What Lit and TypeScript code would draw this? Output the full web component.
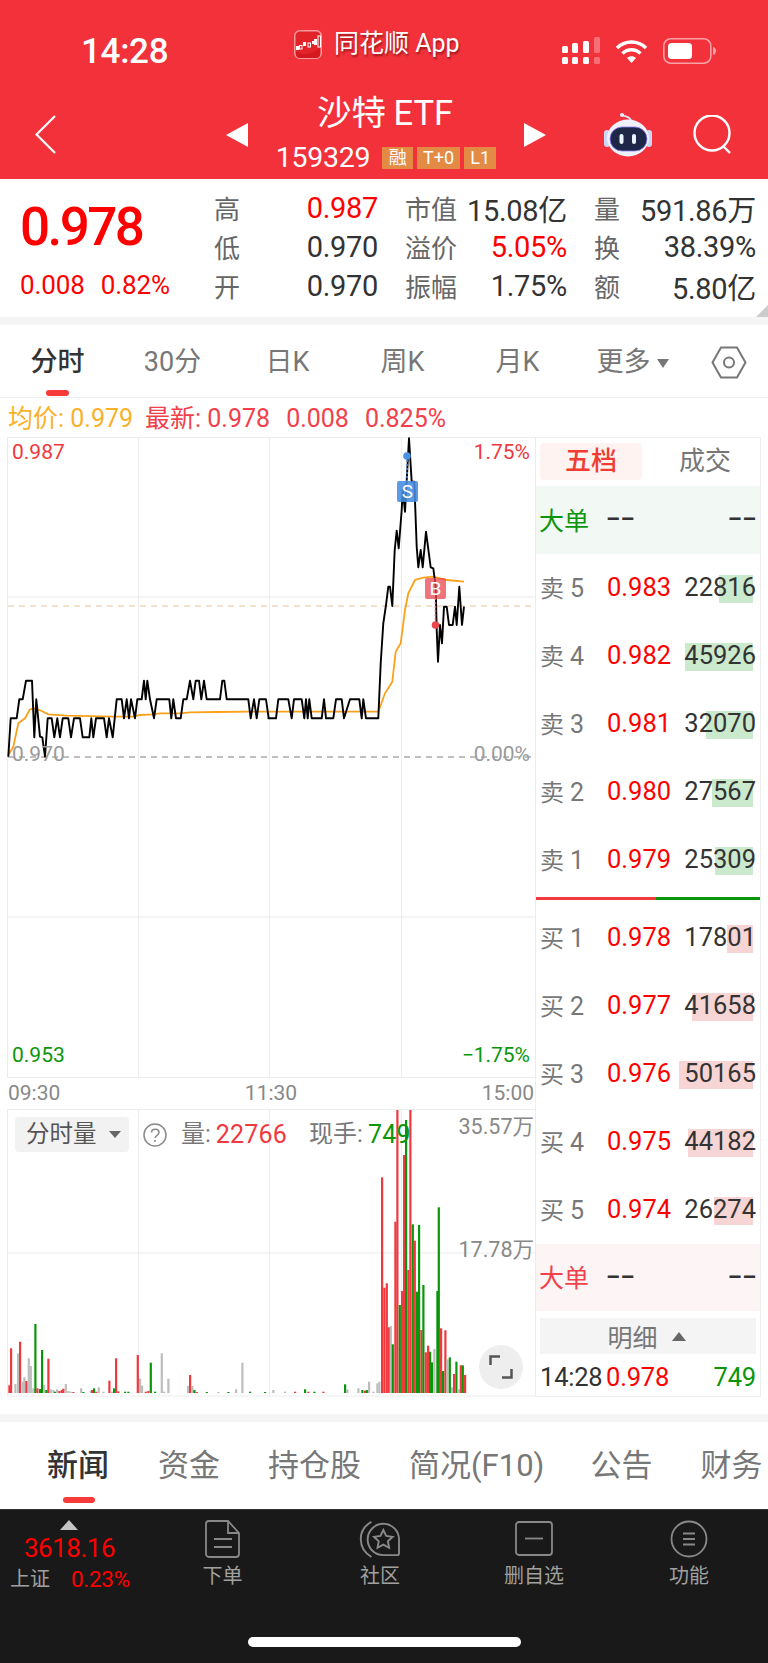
import { LitElement, html, css, svg } from "lit";
import { customElement } from "lit/decorators.js";

const z3 = (a: number[]) => { const o: string[] = []; for (let i = 0; i < a.length; i += 2) o.push(`${(a[i] / 3).toFixed(1)},${(430 + a[i + 1] / 3).toFixed(1)}`); return o; };
const z4 = (a: number[]) => { const o: string[] = []; for (let i = 0; i < a.length; i += 2) o.push(`${(260 + a[i] / 3).toFixed(1)},${(430 + a[i + 1] / 3).toFixed(1)}`); return o; };

const priceLine = [
  ...z3([25,980,32,865,50,865,58,808,68,808,78,752,96,752,103,922,109,808,120,920,127,922,135,980,143,865,155,865,163,922,172,865,180,922,188,865,205,865,213,922,222,865,240,865,248,922,268,922,274,865,280,922,288,865,312,865,320,922,327,865,338,922,350,808,365,808,372,865,380,808,387,865,393,808,405,865,412,808,425,808,432,752,437,808,442,752,450,808,462,865,470,808,508,808,514,865,520,808,528,865,542,865,550,808,560,808,570,752,580,808,587,752,597,752,604,808,612,752,620,808,660,808,667,752,673,752,680,808,745,808,752,865,762,808,770,865,778,808,798,808,806,865]),
  ...z4([25,865,48,865,55,808,85,808,95,865,102,808,125,808,133,865,138,808,143,865,148,808,155,865,185,865,192,808,198,865,220,865,228,808,245,808,252,865,270,808,298,808,305,865,310,808,318,865,355,865,362,700,370,580,378,525,385,470,390,470,397,528,404,360,410,302,416,355,425,240,428,180,435,245,447,25,455,155,463,155,470,350,475,412,482,360,488,412,498,305,512,412,520,415,527,470,530,600,534,695,540,585,546,640,552,530,560,530,567,585,578,585,585,530,590,585,598,470,606,585,612,530]),
].join(" ");

const avgLine = [
  ...z3([25,975,40,950,55,880,75,865,90,838,105,835,125,843,145,853,200,857,340,860,400,860,420,855,460,853,480,850,540,850,570,847,650,846,750,845,810,845]),
  ...z4([355,845,375,790,397,755,407,665,422,640,435,540,445,490,465,450,490,443,520,440,560,450,612,455]),
].join(" ");

const VC: Record<string, string> = { r: "#f0383e", g: "#0a960a", y: "#bdbdbd" };
const vol7: [number, number, string][] = [[28,856,"r"],[33,745,"r"],[46,852,"y"],[54,760,"y"],[60,725,"r"],[68,845,"y"],[73,832,"y"],[79,843,"r"],[86,775,"y"],[92,798,"y"],[100,865,"y"],[106,672,"g"],[112,865,"r"],[120,867,"g"],[126,750,"g"],[132,855,"y"],[139,870,"g"],[145,776,"r"],[152,868,"y"],[160,870,"y"],[165,875,"g"],[171,868,"y"],[178,873,"r"],[185,870,"r"],[190,866,"r"],[197,852,"y"],[205,873,"y"],[212,875,"y"],[220,876,"r"],[243,865,"y"],[250,876,"g"],[272,872,"y"],[276,870,"r"],[282,865,"g"],[289,875,"r"],[296,862,"y"],[310,875,"y"],[328,842,"r"],[336,875,"y"],[342,865,"g"],[348,775,"r"],[355,874,"r"],[375,875,"g"],[385,875,"g"],[413,765,"r"],[420,836,"y"],[426,857,"y"],[437,875,"r"],[445,873,"r"],[452,788,"g"],[465,875,"g"],[485,760,"y"],[492,875,"y"],[505,836,"y"],[564,858,"y"],[570,825,"r"],[577,858,"y"],[583,870,"g"],[590,876,"r"],[620,876,"g"],[655,876,"y"],[685,876,"g"],[708,868,"y"],[727,788,"y"],[750,875,"g"],[795,876,"g"]];
const vol8: [number, number, string][] = [[40,870,"y"],[75,875,"y"],[105,875,"r"],[135,868,"g"],[145,875,"r"],[163,875,"g"],[190,875,"r"],[255,853,"g"],[262,868,"y"],[295,865,"y"],[307,870,"g"],[315,872,"r"],[320,870,"g"],[327,845,"y"],[340,875,"y"],[352,850,"y"],[358,845,"y"],[366,232,"r"],[373,563,"r"],[380,550,"r"],[386,682,"r"],[392,678,"y"],[398,733,"g"],[406,365,"r"],[412,30,"r"],[419,615,"g"],[426,573,"r"],[432,165,"r"],[438,60,"g"],[445,510,"r"],[451,30,"r"],[458,373,"g"],[464,422,"r"],[471,575,"g"],[477,375,"g"],[484,690,"r"],[490,555,"g"],[497,757,"r"],[504,737,"r"],[510,755,"g"],[516,787,"g"],[523,747,"y"],[532,573,"g"],[536,322,"g"],[543,685,"r"],[549,813,"g"],[556,691,"r"],[562,778,"y"],[569,772,"g"],[576,862,"y"],[582,822,"r"],[589,785,"g"],[596,868,"y"],[602,796,"r"],[608,796,"g"],[615,825,"r"]];
const bars = [
  ...vol7.map(([x, t, c]) => ({ x: x / 3, t: 1100 + t / 3, c })),
  ...vol8.map(([x, t, c]) => ({ x: 260 + x / 3, t: 1100 + t / 3, c })),
];

const sells = [
  { l: "卖", n: 5, p: "0.983", v: "22816", w: 34 },
  { l: "卖", n: 4, p: "0.982", v: "45926", w: 68 },
  { l: "卖", n: 3, p: "0.981", v: "32070", w: 47 },
  { l: "卖", n: 2, p: "0.980", v: "27567", w: 41 },
  { l: "卖", n: 1, p: "0.979", v: "25309", w: 38 },
];
const buys = [
  { l: "买", n: 1, p: "0.978", v: "17801", w: 26 },
  { l: "买", n: 2, p: "0.977", v: "41658", w: 61 },
  { l: "买", n: 3, p: "0.976", v: "50165", w: 74 },
  { l: "买", n: 4, p: "0.975", v: "44182", w: 65 },
  { l: "买", n: 5, p: "0.974", v: "26274", w: 39 },
];

@customElement("app-root")
export class AppRoot extends LitElement {
  static styles = css`
    :host { display: block; width: 768px; height: 1663px; overflow: hidden; background: #fff;
      font-family: Roboto, "Noto Sans CJK SC", sans-serif; color: #333; }
    * { box-sizing: border-box; }
    svg { display: block; }
    .header { height: 179px; background: #f2313b; color: #fff; }
    .status { height: 90px; display: grid; grid-template-columns: 294px 268px 1fr; align-items: start; }
    .time { margin: 35px 0 0 81px; font-size: 35px; line-height: 34px; font-weight: 500; letter-spacing: -.3px; }
    .app { margin-top: 28px; display: flex; align-items: center; gap: 12px; font-size: 25px; line-height: 32px; text-shadow: 1px 2px 2px rgba(90,0,0,.55); }
    .app svg { margin-top: 1px; }
    .sys { margin-top: 37px; display: flex; }
    .wifi { margin-left: 15px; margin-top: 2px; }
    .batt { margin-left: 15px; margin-top: 1px; }
    .nav { height: 89px; display: flex; align-items: center; padding-left: 35px; }
    .tri-l { margin-left: 170px; width: 0; height: 0; border-style: solid; border-width: 12.5px 22px 12.5px 0; border-color: transparent #fff transparent transparent; }
    .tri-r { width: 0; height: 0; border-style: solid; border-width: 12.5px 0 12.5px 22px; border-color: transparent transparent transparent #fff; }
    .center { width: 276px; height: 89px; padding-top: 4px; display: flex; flex-direction: column; align-items: center; }
    .title { font-size: 34.500px; line-height: 38px; height: 38px; word-spacing: -1px; margin-right: 2px; }
    .sub { margin-top: 13px; display: flex; align-items: center; height: 26px; }
    .code { font-size: 28.500px; line-height: 26px; margin-right: 12px; letter-spacing: -.3px; }
    .badge { height: 22px; line-height: 22px; background: #e38a44; color: #fff; font-size: 18px; margin-right: 4px; text-align: center; }
    .b1 { width: 31px; } .b2 { width: 43px; } .b3 { width: 32px; margin-right: 0; }
    .robot { margin-left: 58px; }
    .search { margin-left: 40px; }

    .quote { height: 138px; display: flex; position: relative; }
    .quote-left { width: 214px; padding: 17px 0 0 21px; color: #fe0000; }
    .big { font-size: 53px; line-height: 62px; font-weight: 500; letter-spacing: -2.600px; margin-left: -1px; }
    .chg { margin-top: 12px; display: flex; gap: 16px; font-size: 26px; line-height: 30px; letter-spacing: -.1px; margin-left: -1px; }
    .qgrid { display: grid; grid-template-columns: 164px 162px 162px; column-gap: 27px; grid-auto-rows: 39px; padding-top: 9px; }
    .cell { display: flex; justify-content: space-between; align-items: center; }
    .cell span { font-size: 26px; color: #666; }
    .cell b { font-weight: 400; font-size: 29px; color: #333; letter-spacing: -.3px; }
    .cell b.red { color: #fe0000; }
    .corner { position: absolute; right: 0; bottom: 0; width: 0; height: 0; border-style: solid; border-width: 0 0 12px 12px; border-color: transparent transparent #ccc transparent; }
    .sep { height: 8px; background: #f5f5f5; }

    .ktabs { height: 73px; display: grid; grid-template-columns: repeat(6, 115px) 1fr; border-bottom: 1px solid #eee; }
    .kt { position: relative; text-align: center; font-size: 27px; line-height: 74px; color: #777; }
    .kt.on { color: #333; font-weight: 500; }
    .kt.on::after { content: ""; position: absolute; left: 46px; top: 65px; width: 23px; height: 6px; background: #f73b3b; border-radius: 3px; }
    .kt .caret { display: inline-block; margin-left: 6px; vertical-align: 3px; border-style: solid; border-width: 9px 6px 0 6px; border-color: #777 transparent transparent transparent; }
    .hex { display: flex; align-items: center; justify-content: center; }
    .info { height: 39px; padding-left: 8px; display: flex; font-size: 25px; line-height: 41px; color: #f2404a; white-space: nowrap; }
    .avg { color: #fbb02a; margin-right: 12px; }
    .info i { font-style: normal; margin-left: 16px; }

    .main { display: flex; padding-left: 7px; height: 960px; }
    .left { width: 528px; position: relative; }
    .plot { position: relative; height: 641px; }
    .axis { height: 31px; padding: 0 1px; display: flex; justify-content: space-between; font-size: 21px; line-height: 31px; color: #888; }
    .vol { position: relative; height: 288px; }
    .lbl { position: absolute; font-size: 21px; line-height: 24px; }
    .tl { left: 5px; } .tr { right: 5px; }
    .red { color: #f0383e; } .green { color: #0a960a; } .gray { color: #9a9a9a; }
    .y1 { top: 3px; } .y2 { top: 305px; } .y3 { top: 606px; }
    .mk { position: absolute; width: 21px; height: 21px; border-radius: 2px; color: #fff; font-size: 19px; line-height: 21px; text-align: center; }
    .mk-s { left: 390px; top: 44px; background: rgba(69,140,226,.88); }
    .mk-b { left: 418px; top: 141px; background: rgba(233,71,77,.75); }
    .vbar { position: absolute; left: 8px; right: 8px; top: 8px; display: flex; align-items: center; font-size: 24px; line-height: 35px; color: #777; white-space: nowrap; }
    .sel { height: 35px; width: 114px; background: #f2f2f2; border-radius: 4px; padding-left: 11px; display: flex; align-items: center; color: #555; font-size: 23.500px; }
    .sel em { margin-left: 12px; border-style: solid; border-width: 7px 6px 0 6px; border-color: #666 transparent transparent transparent; }
    .help { margin-left: 14px; margin-right: 14px; }
    .vbar .red, .vbar .green { margin-right: 22px; margin-left: 5px; font-size: 25px; letter-spacing: .2px; }
    .v1, .v2 { position: absolute; right: 1px; font-size: 21.500px; line-height: 24px; color: #888; }
    .v1 { top: 6px; } .v2 { top: 129px; }
    .expand { position: absolute; left: 472px; top: 236px; width: 44px; height: 44px; border-radius: 50%; background: #eee; display: flex; align-items: center; justify-content: center; }

    .right { width: 226px; height: 960px; border: 1px solid #eee; }
    .ptabs { height: 48px; display: flex; font-size: 26px; padding: 5px 0 0 4px; }
    .pt { width: 102px; height: 37px; line-height: 37px; text-align: center; border-radius: 4px; color: #777; }
    .pt.on { background: #fff3f2; color: #f03c32; margin-right: 12px; font-weight: 500; }
    .bigrow { height: 68px; display: grid; grid-template-columns: 67px 1fr auto; align-items: center; padding: 0 3px 3px 3px; font-size: 25px; color: #333; }
    .bigrow.up { background: #f2f9f5; color: #0a960a; }
    .bigrow.down { background: #fdf5f5; color: #f2404a; height: 67px; }
    .dash { color: #333; font-weight: 500; display: block; width: max-content; white-space: nowrap; transform: scaleX(1.72); }
    .dash.l { transform-origin: 0 50%; }
    .dash.e { transform-origin: 100% 50%; }
    .row { position: relative; height: 68px; display: grid; grid-template-columns: 67px 1fr auto; align-items: center; padding: 0 4px 3px 4px; }
    .row .lab { position: relative; font-size: 24px; color: #777; }
    .row .lab span { margin-left: 6px; font-size: 25px; }
    .row .pr { font-size: 25.500px; color: #fe0000; }
    .row .nm { position: relative; font-size: 25.500px; color: #333; }
    .fill { position: absolute; right: 7px; top: 21px; height: 28px; }
    .fill.g { background: #cbe9cd; } .fill.r { background: #f8d5d5; }
    .split { margin-top: 3px; height: 3px; display: flex; }
    .split i { display: block; height: 3px; }
    .split .a { width: 120px; background: #f0383e; } .split .b { flex: 1; background: #0a960a; }
    .buys { margin-top: 4px; }
    .detail { margin: 7px 4px 0 4px; height: 36px; background: #f4f4f4; color: #777; font-size: 25px; display: flex; align-items: center; justify-content: center; padding-right: 3px; }
    .detail em { margin-left: 14px; border-style: solid; border-width: 0 7px 9px 7px; border-color: transparent transparent #666 transparent; }
    .last { height: 41px; display: grid; grid-template-columns: 66px 1fr auto; align-items: center; padding: 4px 4px 0; font-size: 25.500px; letter-spacing: -.2px; }
    .last .pr { color: #fe0000; } .last .g { color: #0a960a; }

    .bsep { margin-top: 17px; height: 8px; background: #f5f5f5; }
    .news { height: 87px; display: flex; position: relative; font-size: 31px; line-height: 88px; color: #777; white-space: nowrap; padding-left: 47px; }
    .news span { margin-right: 48px; }
    .news span.on { color: #333; font-weight: 500; position: relative; margin-right: 49px; }
    .news span:nth-child(4) { margin-right: 46px; }
    .news span.on::after { content: ""; position: absolute; left: 16px; top: 75px; width: 32px; height: 6px; border-radius: 3px; background: #f73b3b; }
    .foot { height: 155px; background: #191919; display: flex; flex-direction: column; color: #a0a0a0; border-top: 1px solid #333; }
    .fgrid { height: 127px; display: grid; grid-template-columns: 146px 153px 162px 146px 161px; }
    .idx { padding: 10px 0 0 10px; }
    .idx .up { width: 0; height: 0; margin-left: 50px; border-style: solid; border-width: 0 9px 10px 9px; border-color: transparent transparent #c4c4c4 transparent; }
    .idx .num { margin-left: 14px; color: #fe0000; font-size: 26px; line-height: 30px; margin-top: 3px; letter-spacing: -.5px; }
    .idx .ln { display: flex; align-items: center; margin-top: 2px; font-size: 20px; line-height: 28px; }
    .idx .ln b { font-weight: 400; color: #fe0000; font-size: 22.500px; margin-left: 21px; letter-spacing: -.3px; }
    .fi { padding-top: 10px; display: flex; flex-direction: column; align-items: center; font-size: 20px; line-height: 28px; }
    .fi.end { padding-left: 3px; }
    .fi svg { margin-bottom: 4px; }
    .home { width: 273px; height: 10px; margin-left: 248px; background: #fff; border-radius: 5px; }
  `;

  private level(r: { l: string; n: number; p: string; v: string; w: number }, cls: string) {
    return html`<div class="row">
      <div class="lab">${r.l}<span>${r.n}</span></div>
      <div class="pr">${r.p}</div>
      <div class="fill ${cls}" style="width:${r.w}px"></div>
      <div class="nm">${r.v}</div>
    </div>`;
  }

  render() {
    return html`
      <div class="header">
        <div class="status">
          <div class="time">14:28</div>
          <div class="app">
            <svg width="28" height="29" viewBox="0 0 28 29">
              <rect x=".75" y=".75" width="26.5" height="27.5" rx="5" fill="#e3232a" stroke="#f79a9d" stroke-width="1.5"/>
              <path d="M2 21c7 5 15 4 24-3v6a4 4 0 0 1-4 4H6a4 4 0 0 1-4-3z" fill="#d3191f"/>
              <g fill="#fff"><rect x="2" y="16" width="3" height="4"/><rect x="9" y="12" width="3" height="4"/><rect x="18" y="11" width="2" height="3"/><rect x="20" y="9" width="3" height="6"/></g>
              <g fill="none" stroke="#fff" stroke-width="1"><rect x="5.500" y="15.500" width="2.500" height="3.500"/><rect x="14" y="13" width="2.500" height="4"/><rect x="24" y="6" width="2.500" height="11"/></g>
            </svg>
            <span>同花顺 App</span>
          </div>
          <div class="sys">
            <svg width="38" height="27" viewBox="0 0 38 27" fill="#fff">
              <rect x="0" y="9" width="6" height="7" rx="1.5"/><rect x="10" y="6" width="6" height="10" rx="1.5"/><rect x="21" y="4" width="6" height="12" rx="1.5"/><rect x="32" y="0" width="6" height="16" rx="1.5" opacity=".3"/>
              <rect x="0" y="20" width="6" height="7" rx="1.5"/><rect x="10" y="20" width="6" height="7" rx="1.5"/><rect x="21" y="20" width="6" height="7" rx="1.5"/><rect x="32" y="20" width="6" height="7" rx="1.5" opacity=".3"/>
            </svg>
            <svg class="wifi" width="33" height="24" viewBox="0 0 33 24" fill="none" stroke="#fff" stroke-width="3.4">
              <path d="M2 9C10 1 23 1 31 9"/><path d="M7.5 14.5c5-5 13-5 18 0"/>
              <path d="M12 19c2.500-2.300 6.500-2.300 9 0l-4.500 5z" fill="#fff" stroke="none"/>
            </svg>
            <svg class="batt" width="53" height="26" viewBox="0 0 53 26">
              <rect x=".8" y=".8" width="47" height="24.400" rx="7" fill="none" stroke="#fff" stroke-opacity=".55" stroke-width="1.600"/>
              <rect x="5" y="5" width="24" height="16" rx="3.500" fill="#fff"/>
              <path d="M50 9c2 .6 3 2 3 4s-1 3.400-3 4z" fill="#fff" fill-opacity=".55"/>
            </svg>
          </div>
        </div>
        <div class="nav">
          <svg width="21" height="39" viewBox="0 0 21 39" fill="none" stroke="#fff" stroke-width="2.200"><path d="M20 1 1.500 19.500 20 38"/></svg>
          <div class="tri-l"></div>
          <div class="center">
            <div class="title">沙特 ETF</div>
            <div class="sub">
              <span class="code">159329</span>
              <span class="badge b1">融</span><span class="badge b2">T+0</span><span class="badge b3">L1</span>
            </div>
          </div>
          <div class="tri-r"></div>
          <svg class="robot" width="48" height="44" viewBox="0 0 48 44">
            <path d="M27 7C25 3 21 4 18.500 2" fill="none" stroke="#dfe4f6" stroke-width="1.800"/>
            <circle cx="18" cy="2" r="2" fill="#eef1fb"/>
            <rect x="0" y="17" width="6" height="17" rx="3" fill="#cdd6f3"/><rect x="42" y="17" width="6" height="17" rx="3" fill="#cdd6f3"/>
            <ellipse cx="24" cy="25" rx="21" ry="18.500" fill="#eef1fc"/>
            <rect x="6" y="14" width="37" height="24" rx="12" fill="#1f2748" stroke="#8d7ff0" stroke-width=".8"/>
            <rect x="15.500" y="21" width="4" height="10" rx="2" fill="#eaf3ff"/><rect x="28" y="21" width="4" height="10" rx="2" fill="#eaf3ff"/>
          </svg>
          <svg class="search" width="40" height="39" viewBox="0 0 40 39" fill="none" stroke="#fff" stroke-width="2.400"><circle cx="20" cy="18" r="17.500"/><path d="M31 31l7 7"/></svg>
        </div>
      </div>

      <div class="quote">
        <div class="quote-left">
          <div class="big">0.978</div>
          <div class="chg"><span>0.008</span><span>0.82%</span></div>
        </div>
        <div class="qgrid">
          <div class="cell"><span>高</span><b class="red">0.987</b></div>
          <div class="cell"><span>市值</span><b>15.08亿</b></div>
          <div class="cell"><span>量</span><b>591.86万</b></div>
          <div class="cell"><span>低</span><b>0.970</b></div>
          <div class="cell"><span>溢价</span><b class="red">5.05%</b></div>
          <div class="cell"><span>换</span><b>38.39%</b></div>
          <div class="cell"><span>开</span><b>0.970</b></div>
          <div class="cell"><span>振幅</span><b>1.75%</b></div>
          <div class="cell"><span>额</span><b>5.80亿</b></div>
        </div>
        <div class="corner"></div>
      </div>
      <div class="sep"></div>

      <div class="ktabs">
        <div class="kt on">分时</div><div class="kt">30分</div><div class="kt">日K</div><div class="kt">周K</div><div class="kt">月K</div>
        <div class="kt">更多<span class="caret"></span></div>
        <div class="hex">
          <svg width="36" height="33" viewBox="0 0 36 33" fill="none" stroke="#777" stroke-width="2"><path d="M1.500 16.500 10 1.500h16l8.500 15-8.500 15H10z"/><circle cx="18" cy="16.500" r="5"/></svg>
        </div>
      </div>
      <div class="info">
        <span class="avg">均价: 0.979</span><span>最新: 0.978</span><i>0.008</i><i>0.825%</i>
      </div>

      <div class="main">
        <div class="left">
          <div class="plot">
            <svg width="529" height="641" viewBox="7 437 529 641">
              <g stroke="#ececec" stroke-width="1" fill="none">
                <rect x="7.500" y="437.500" width="528" height="640"/>
                <path d="M138.500 437v641M269.500 437v641M401.500 437v641M7 597h529M7 917h529"/>
              </g>
              <path d="M8 606h528" stroke="#e8c49a" stroke-width="1" stroke-dasharray="6 5"/>
              <path d="M8 757h528" stroke="#aaa" stroke-width="1.500" stroke-dasharray="6 5"/>
              <polyline points=${avgLine} fill="none" stroke="#f9a11b" stroke-width="1.800"/>
              <polyline points=${priceLine} fill="none" stroke="#000" stroke-width="1.900" stroke-linejoin="round"/>
              <path d="M407 456v26" stroke="#4a90e2" stroke-width="1.500" stroke-dasharray="2 2"/>
              <circle cx="407" cy="456" r="3.800" fill="#4a90e2"/>
              <path d="M435.500 598v27" stroke="#e9474d" stroke-width="1.500" stroke-dasharray="2 2"/>
              <circle cx="435.500" cy="625" r="3.800" fill="#e9474d"/>
            </svg>
            <div class="lbl tl y1 red">0.987</div>
            <div class="lbl tr y1 red">1.75%</div>
            <div class="lbl tl y2 gray">0.970</div>
            <div class="lbl tr y2 gray">0.00%</div>
            <div class="lbl tl y3 green">0.953</div>
            <div class="lbl tr y3 green">−1.75%</div>
            <div class="mk mk-s">S</div>
            <div class="mk mk-b">B</div>
          </div>
          <div class="axis"><span>09:30</span><span>11:30</span><span>15:00</span></div>
          <div class="vol">
            <svg width="529" height="288" viewBox="7 1109 529 288">
              <g stroke="#ececec" stroke-width="1" fill="none">
                <rect x="7.500" y="1109.500" width="528" height="286.500"/>
                <path d="M138.500 1109v287M269.500 1109v287M401.500 1109v287M7 1253h529"/>
              </g>
              ${bars.map((b) => svg`<rect x=${(b.x - 1).toFixed(1)} y=${b.t.toFixed(1)} width="2.200" height=${(1393 - b.t).toFixed(1)} fill=${VC[b.c]}/>`)}
            </svg>
            <div class="vbar">
              <div class="sel">分时量<em></em></div>
              <svg class="help" width="24" height="24" viewBox="0 0 24 24" fill="none" stroke="#8a8a8a" stroke-width="1.500"><circle cx="12" cy="12" r="11"/><path d="M8.500 9.500c0-4.500 7.500-4.500 7.500 0 0 3-3.500 2.500-4 5.500"/><path d="M12 17v2"/></svg>
              <span>量:</span><span class="red">22766</span>
              <span>现手:</span><span class="green">749</span>
            </div>
            <div class="v1">35.57万</div>
            <div class="v2">17.78万</div>
            <div class="expand">
              <svg width="24" height="24" viewBox="0 0 24 24" fill="none" stroke="#555" stroke-width="2.500"><path d="M1.500 10V1.500H11M22.500 14v8.500H13"/></svg>
            </div>
          </div>
        </div>
        <div class="right">
          <div class="ptabs"><div class="pt on">五档</div><div class="pt">成交</div></div>
          <div class="bigrow up"><span>大单</span><span class="dash l">--</span><span class="dash e">--</span></div>
          ${sells.map((r) => this.level(r, "g"))}
          <div class="split"><i class="a"></i><i class="b"></i></div>
          <div class="buys">${buys.map((r) => this.level(r, "r"))}</div>
          <div class="bigrow down"><span>大单</span><span class="dash l">--</span><span class="dash e">--</span></div>
          <div class="detail">明细<em></em></div>
          <div class="last"><span>14:28</span><span class="pr">0.978</span><span class="g">749</span></div>
        </div>
      </div>

      <div class="bsep"></div>
      <div class="news">
        <span class="on">新闻</span><span>资金</span><span>持仓股</span><span>简况(F10)</span><span>公告</span><span>财务</span>
      </div>
      <div class="foot">
        <div class="fgrid">
          <div class="idx">
            <div class="up"></div>
            <div class="num">3618.16</div>
            <div class="ln"><span>上证</span><b>0.23%</b></div>
          </div>
          <div class="fi">
            <svg width="36" height="38" viewBox="0 0 36 38" fill="none" stroke="#888" stroke-width="1.800"><path d="M4 1h19l11 12v21a3 3 0 0 1-3 3H4a3 3 0 0 1-3-3V4a3 3 0 0 1 3-3z"/><path d="M23 1v12h11"/><path d="M9 19h18M9 27h18"/></svg>
            <span>下单</span>
          </div>
          <div class="fi">
            <svg width="42" height="38" viewBox="0 0 42 40" fill="none" stroke="#888" stroke-width="2"><path d="M12 2C-3 10-3 30 12 39"/><path d="M41 21a16.500 16.500 0 1 0-16.500 16H39a2 2 0 0 0 2-2z"/><path d="m24.500 10.500 3 6.300 6.800.9-5 4.700 1.300 6.800-6.100-3.300-6.100 3.300 1.300-6.800-5-4.700 6.800-.9z"/></svg>
            <span>社区</span>
          </div>
          <div class="fi">
            <svg width="38" height="38" viewBox="0 0 38 38" fill="none" stroke="#888" stroke-width="1.800"><rect x="1" y="2" width="36" height="33" rx="3"/><path d="M10 18.500h18"/></svg>
            <span>删自选</span>
          </div>
          <div class="fi end">
            <svg width="38" height="38" viewBox="0 0 38 38" fill="none" stroke="#888" stroke-width="1.800"><circle cx="19" cy="19" r="17.500"/><path d="M13 13.500h12M13 19h12M13 24.500h12"/></svg>
            <span>功能</span>
          </div>
        </div>
        <div class="home"></div>
      </div>
    `;
  }
}
